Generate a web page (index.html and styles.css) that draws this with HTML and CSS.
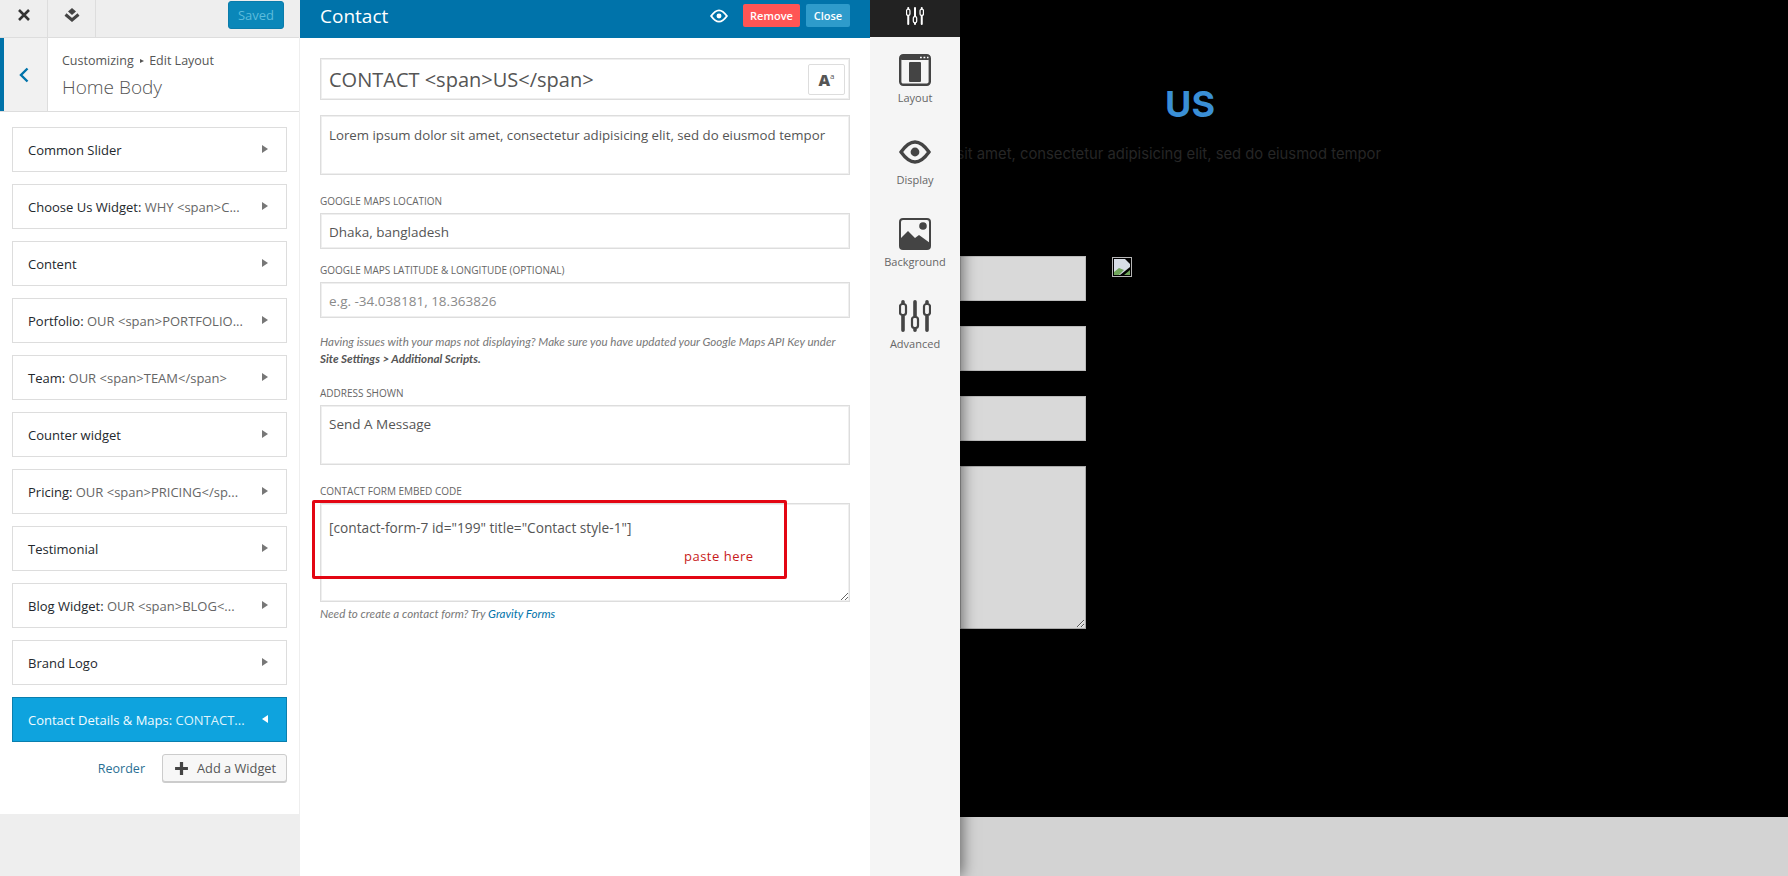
FILE: index.html
```html
<!DOCTYPE html>
<html lang="en">
<head>
    <meta charset="UTF-8">
    <title>Customizing: Home Body</title>
    <meta name="viewport" content="width=device-width, initial-scale=1.0">
    <link rel="stylesheet" href="styles.css">
</head>
<body>
    <svg class="sprite" aria-hidden="true">
        <symbol id="i-eye" viewBox="0 0 32 24">
            <path d="M2 12C7 5 11 2 16 2s9 3 14 10c-5 7-9 10-14 10S7 19 2 12Z" fill="none" stroke="currentColor" stroke-width="3.4"/>
            <circle cx="16" cy="12" r="4.4" fill="currentColor"/>
        </symbol>
        <symbol id="i-sliders" viewBox="0 0 32 32">
            <g fill="none" stroke="currentColor" stroke-width="3.6" stroke-linecap="round">
                <path d="M4 1.800V3M4 16V30.200M16 1.800V16M16 29V30.200M28 1.800V3M28 16V30.200"/>
                <rect x="1" y="4" width="6" height="11" rx="2.500" stroke-width="2.200"/>
                <rect x="13" y="17" width="6" height="11" rx="2.500" stroke-width="2.200"/>
                <rect x="25" y="4" width="6" height="11" rx="2.500" stroke-width="2.200"/>
            </g>
        </symbol>
    </svg>

    <aside class="sidebar">
        <div class="topbar">
            <div class="topbar-cell">
                <svg width="14" height="14" viewBox="0 0 14 14"><path d="M2 2l10 10M12 2L2 12" stroke="#333" stroke-width="2.600"/></svg>
            </div>
            <div class="topbar-cell">
                <svg width="16" height="14" viewBox="0 0 16 14"><path d="M8 0l4 3.500-4 3.500-4-3.500Z" fill="#444"/><path d="M1.500 6.500L8 12l6.500-5.500" fill="none" stroke="#444" stroke-width="3"/></svg>
            </div>
            <button class="saved-btn">Saved</button>
        </div>
        <div class="section-head">
            <div class="back-cell">
                <svg width="10" height="16" viewBox="0 0 10 16"><path d="M8.500 1.500L2 8l6.500 6.500" fill="none" stroke="#0073aa" stroke-width="2.400"/></svg>
            </div>
            <div class="section-title">
                <div class="crumb">Customizing <span class="crumb-sep"></span> Edit Layout</div>
                <h1>Home Body</h1>
            </div>
        </div>
        <div class="widget-list">
            <div class="widget"><span><b>Common Slider</b></span><i class="arrow"></i></div>
            <div class="widget"><span><b>Choose Us Widget:</b> WHY &lt;span&gt;C...</span><i class="arrow"></i></div>
            <div class="widget"><span><b>Content</b></span><i class="arrow"></i></div>
            <div class="widget"><span><b>Portfolio:</b> OUR &lt;span&gt;PORTFOLIO...</span><i class="arrow"></i></div>
            <div class="widget"><span><b>Team:</b> OUR &lt;span&gt;TEAM&lt;/span&gt;</span><i class="arrow"></i></div>
            <div class="widget"><span><b>Counter widget</b></span><i class="arrow"></i></div>
            <div class="widget"><span><b>Pricing:</b> OUR &lt;span&gt;PRICING&lt;/sp...</span><i class="arrow"></i></div>
            <div class="widget"><span><b>Testimonial</b></span><i class="arrow"></i></div>
            <div class="widget"><span><b>Blog Widget:</b> OUR &lt;span&gt;BLOG&lt;...</span><i class="arrow"></i></div>
            <div class="widget"><span><b>Brand Logo</b></span><i class="arrow"></i></div>
            <div class="widget active"><span><b>Contact Details &amp; Maps:</b> CONTACT...</span><i class="arrow"></i></div>
        </div>
        <div class="list-actions">
            <a class="reorder" href="#">Reorder</a>
            <button class="add-btn">
                <svg width="15" height="15" viewBox="0 0 14 14"><path d="M7 1v12M1 7h12" stroke="#444" stroke-width="3"/></svg>
                Add a Widget
            </button>
        </div>
    </aside>

    <main class="editor">
        <div class="editor-head">
            <h2>Contact</h2>
            <svg class="head-eye" width="18" height="14"><use href="#i-eye"/></svg>
            <button class="btn-remove">Remove</button>
            <button class="btn-close">Close</button>
        </div>
        <div class="editor-body">
            <div class="title-field">
                <input class="title-input" type="text" value="CONTACT <span>US</span>">
                <div class="font-btn"><b>A</b><sup>a</sup></div>
            </div>
            <textarea class="desc-input">Lorem ipsum dolor sit amet, consectetur adipisicing elit, sed do eiusmod tempor</textarea>

            <label class="field-label label-location">Google Maps Location</label>
            <input class="text-input" type="text" value="Dhaka, bangladesh">

            <label class="field-label label-latlng">Google Maps Latitude &amp; Longitude (Optional)</label>
            <input class="text-input" type="text" placeholder="e.g. -34.038181, 18.363826">
            <p class="help help-maps">Having issues with your maps not displaying? Make sure you have updated your Google Maps API Key under <b>Site Settings &gt; Additional Scripts.</b></p>

            <label class="field-label label-address">Address Shown</label>
            <textarea class="address-input">Send A Message</textarea>

            <label class="field-label label-embed">Contact Form Embed Code</label>
            <div class="embed-wrap">
                <textarea class="embed-input">[contact-form-7 id="199" title="Contact style-1"]</textarea>
                <div class="red-box"><span>paste here</span></div>
            </div>
            <p class="help help-embed">Need to create a contact form? Try <a href="#">Gravity Forms</a></p>
        </div>
    </main>

    <nav class="rail">
        <div class="rail-top"><svg width="18" height="18"><use href="#i-sliders"/></svg></div>
        <div class="rail-item">
            <svg class="rail-icon" width="32" height="32" viewBox="0 0 32 32">
                <rect x="1.200" y="1.200" width="29.600" height="29.600" rx="3" fill="none" stroke="#444" stroke-width="2.400"/>
                <rect x="1" y="1" width="30" height="5" rx="2" fill="#444"/>
                <path d="M21 3.500h1.800M24.500 3.500h1.800M28 3.500h1.500" stroke="#fff" stroke-width="1.500"/>
                <rect x="10" y="8" width="12" height="20" rx="1" fill="#444"/>
            </svg>
            Layout
        </div>
        <div class="rail-item">
            <svg class="rail-icon" width="32" height="24"><use href="#i-eye"/></svg>
            Display
        </div>
        <div class="rail-item">
            <svg class="rail-icon" width="32" height="32" viewBox="0 0 32 32">
                <rect x="1" y="1" width="30" height="30" rx="3" fill="none" stroke="#444" stroke-width="2"/>
                <circle cx="24" cy="8" r="3.800" fill="#444"/>
                <path d="M1 21l8-8 7 7 4-3 11 8v3a3 3 0 0 1-3 3H4a3 3 0 0 1-3-3Z" fill="#444"/>
            </svg>
            Background
        </div>
        <div class="rail-item">
            <svg class="rail-icon" width="32" height="32"><use href="#i-sliders"/></svg>
            Advanced
        </div>
    </nav>

    <section class="preview">
        <div class="preview-stage">
            <div class="preview-heading">US</div>
            <div class="preview-lead"><span>Lorem ipsum dolor sit amet, consectetur adipisicing elit, sed do eiusmod tempor</span></div>
            <div class="preview-form">
                <div class="preview-fields">
                    <input class="preview-input" type="text">
                    <input class="preview-input" type="text">
                    <input class="preview-input" type="text">
                    <textarea class="preview-text"></textarea>
                </div>
                <svg class="broken-img" width="20" height="20" viewBox="0 0 20 20">
                    <rect x="0.500" y="0.500" width="19" height="19" fill="#000" stroke="#b5b5b5"/>
                    <path d="M2 2h11l5 5v3L8 18H2Z" fill="#d7dde6"/>
                    <path d="M2 18v-3l5-4 5 2-5 5Z" fill="#6fa45a"/>
                    <path d="M12 18l6-5v5Z" fill="#6fa45a"/>
                </svg>
            </div>
        </div>
        <div class="preview-foot"></div>
    </section>
</body>
</html>
```

FILE: styles.css
```css
* {
    box-sizing: border-box;
}
html, body {
    height: 100%;
}
body {
    margin: 0;
    display: flex;
    height: 876px;
    overflow: hidden;
    background: #eee;
    font-family: "Open Sans", "Noto Sans", sans-serif;
    font-size: 13px;
    color: #555;
}
.sprite {
    display: none;
}
button {
    font-family: inherit;
    cursor: pointer;
}

/* left column */
.sidebar {
    width: 300px;
    flex: none;
    height: 814px;
    background: #fff;
    border-right: 1px solid #eee;
}
.topbar {
    display: flex;
    align-items: flex-start;
    height: 38px;
    background: #eee;
    border-bottom: 1px solid #ddd;
}
.topbar-cell {
    width: 48px;
    height: 37px;
    display: flex;
    align-items: center;
    justify-content: center;
    border-right: 1px solid #ddd;
}
.topbar-cell svg {
    margin-top: -7px;
}
.saved-btn {
    margin: 1px 15px 0 auto;
    width: 56px;
    height: 28px;
    background: #0a87b9;
    border: 1px solid #0a7cab;
    border-radius: 3px;
    color: #5cbcdc;
    font-size: 13px;
    padding: 0;
}
.section-head {
    display: flex;
    height: 74px;
    border-bottom: 1px solid #ddd;
    background: #fff;
}
.back-cell {
    width: 48px;
    display: flex;
    align-items: center;
    justify-content: center;
    padding-right: 4px;
    background: #f1f1f1;
    border-left: 4px solid #0073aa;
    border-right: 1px solid #ddd;
}
.section-title {
    padding: 13px 0 0 14px;
}
.crumb {
    line-height: 20px;
    font-size: 12.500px;
    color: #555;
}
.crumb-sep {
    display: inline-block;
    margin: 0 2px 2px 3px;
    border-left: 4px solid #555;
    border-top: 2.500px solid transparent;
    border-bottom: 2.500px solid transparent;
}
.section-title h1 {
    margin: 3px 0 0;
    font-size: 19px;
    line-height: 27px;
    font-weight: 300;
    color: #555;
}
.widget-list {
    display: flex;
    flex-direction: column;
    gap: 12px;
    padding: 15px 12px 0 12px;
}
.widget {
    height: 45px;
    display: flex;
    align-items: center;
    justify-content: space-between;
    padding: 0 18px 0 15px;
    background: #fff;
    border: 1px solid #ddd;
    color: #666;
    white-space: nowrap;
}
.widget b {
    font-weight: 500;
    color: #23282d;
}
.arrow {
    margin-top: -2px;
    border-left: 6px solid #777;
    border-top: 4.500px solid transparent;
    border-bottom: 4.500px solid transparent;
}
.widget.active {
    background: #0ea3de;
    border-color: #0a7fae;
    color: #dff3fc;
    font-weight: 500;
}
.widget.active b {
    color: #f2fbff;
    font-weight: 500;
}
.widget.active .arrow {
    border-left: 0;
    border-right: 6px solid #fff;
}
.list-actions {
    display: flex;
    justify-content: flex-end;
    align-items: center;
    gap: 17px;
    padding: 12px 12px 0 0;
}
.reorder {
    font-size: 12.500px;
    color: #2a6f94;
    text-decoration: none;
}
.add-btn {
    display: flex;
    align-items: center;
    gap: 8px;
    width: 125px;
    height: 28px;
    padding: 0 0 0 11px;
    background: #f7f7f7;
    border: 1px solid #ccc;
    border-radius: 3px;
    box-shadow: 0 1px 0 #ccc;
    color: #555;
    font-size: 12.800px;
}

/* widget form */
.editor {
    width: 570px;
    flex: none;
    background: #fff;
}
.editor-head {
    display: flex;
    align-items: flex-start;
    height: 38px;
    padding: 4px 20px 0 20px;
    background: #0073aa;
    color: #fff;
}
.editor-head h2 {
    margin: 0 auto 0 0;
    font-size: 19px;
    line-height: 25px;
    font-weight: 400;
}
.head-eye {
    margin: 5px 15px 0 0;
    color: #fff;
}
.btn-remove, .btn-close {
    height: 23px;
    padding: 0;
    border: 0;
    border-radius: 2px;
    color: #fff;
    font-size: 11px;
    font-weight: 600;
}
.btn-remove {
    width: 57px;
    margin-right: 6px;
    background: #ff5555;
}
.btn-close {
    width: 44px;
    background: #2e9bcb;
}
.editor-body {
    padding: 20px 20px 0 20px;
}
input, textarea {
    display: block;
    width: 100%;
    font-family: inherit;
    color: #555;
    background: #fff;
    border: 1px solid #ddd;
    box-shadow: inset 0 0 0 1px #efefef;
    border-radius: 0;
    outline: none;
}
.editor-body input, .editor-body textarea {
    padding: 0 8px;
    font-size: 13.500px;
}
.title-field {
    position: relative;
    height: 42px;
}
.editor-body .title-input {
    height: 42px;
    font-size: 20px;
}
.font-btn {
    position: absolute;
    top: 6px;
    right: 5px;
    width: 37px;
    height: 31px;
    display: flex;
    align-items: center;
    justify-content: center;
    border: 1px solid #ddd;
    border-radius: 2px;
    color: #555;
    font-size: 16px;
}
.font-btn b {
    font-weight: 800;
}
.font-btn sup {
    font-size: 8px;
    line-height: 1;
    margin-top: -7px;
}
.editor-body .desc-input {
    height: 60px;
    margin-top: 15px;
    padding-top: 10px;
    font-size: 13.250px;
    resize: none;
}
.field-label {
    display: block;
    font-size: 10px;
    line-height: 14px;
    text-transform: uppercase;
    color: #666;
}
.label-location {
    margin-top: 19px;
    margin-bottom: 5px;
}
.label-latlng {
    margin-top: 14px;
    margin-bottom: 5px;
}
.label-address {
    margin-top: 19px;
    margin-bottom: 5px;
}
.label-embed {
    margin-top: 19px;
    margin-bottom: 5px;
}
.editor-body .text-input {
    height: 36px;
    padding-top: 1px;
}
.text-input::placeholder {
    color: #8a8a8a;
}
.help {
    margin: 0;
    font-family: "Lato", sans-serif;
    font-style: italic;
    font-size: 11.600px;
    color: #777;
}
.help-maps {
    margin-top: 15px;
    line-height: 17px;
}
.help b {
    color: #555;
}
.help-embed {
    margin-top: 4px;
    line-height: 16px;
}
.help a {
    color: #0073aa;
    text-decoration: none;
}
.editor-body .address-input {
    height: 60px;
    padding-top: 9px;
    resize: none;
}
.embed-wrap {
    position: relative;
}
.editor-body .embed-input {
    height: 99px;
    padding-top: 14px;
    font-size: 13.700px;
    resize: vertical;
}
.red-box {
    position: absolute;
    top: -3px;
    left: -8px;
    width: 475px;
    height: 79px;
    border: 3px solid #e30613;
    border-radius: 2px;
}
.red-box span {
    position: absolute;
    left: 369px;
    top: 44px;
    color: #c81a1a;
    font-size: 13px;
    letter-spacing: 0.5px;
}

/* option tabs */
.rail {
    position: relative;
    z-index: 2;
    width: 90px;
    flex: none;
    display: flex;
    flex-direction: column;
    background: #f5f5f5;
    box-shadow: 2px 0 14px rgba(0, 0, 0, 0.55);
    clip-path: inset(0 -30px 0 0);
}
.rail-top {
    height: 37px;
    display: flex;
    align-items: center;
    justify-content: center;
    padding-bottom: 5px;
    background: #222;
    color: #fff;
}
.rail-item {
    height: 82px;
    display: flex;
    flex-direction: column;
    align-items: center;
    font-size: 11px;
    line-height: 16px;
    color: #666;
    padding-top: 17px;
}
.rail-icon {
    color: #444;
    margin-bottom: 4px;
}
.rail-item:nth-child(3) {
    padding-top: 21px;
}
.rail-item:nth-child(3) .rail-icon {
    margin-bottom: 8px;
}

/* site preview behind the panels */
.preview {
    flex: 1;
    min-width: 0;
    display: flex;
    flex-direction: column;
    overflow: hidden;
}
.preview-stage {
    height: 817px;
    background: #000;
    padding-top: 82px;
}
.preview-heading {
    width: 460px;
    text-align: center;
    font-family: "Inter", sans-serif;
    font-weight: 700;
    font-size: 36px;
    line-height: 44px;
    color: #3a8fd6;
}
.preview-lead {
    width: 421px;
    margin-top: 18px;
    display: flex;
    justify-content: flex-end;
    white-space: nowrap;
    font-family: "Inter", sans-serif;
    font-size: 14.800px;
    line-height: 20px;
    color: #262626;
}
.preview-form {
    display: flex;
    align-items: flex-start;
    gap: 26px;
    margin-top: 92px;
}
.preview-fields {
    width: 126px;
    display: flex;
    flex-direction: column;
    gap: 25px;
}
.preview-input {
    height: 45px;
    background: #d9d9d9;
    border: 1px solid #bbb;
    box-shadow: none;
}
.preview-text {
    height: 163px;
    background: #d9d9d9;
    border: 1px solid #aaa;
    box-shadow: none;
}
.broken-img {
    flex: none;
    margin-top: 1px;
}
.preview-foot {
    flex: 1;
    background: #d3d3d3;
}
```
